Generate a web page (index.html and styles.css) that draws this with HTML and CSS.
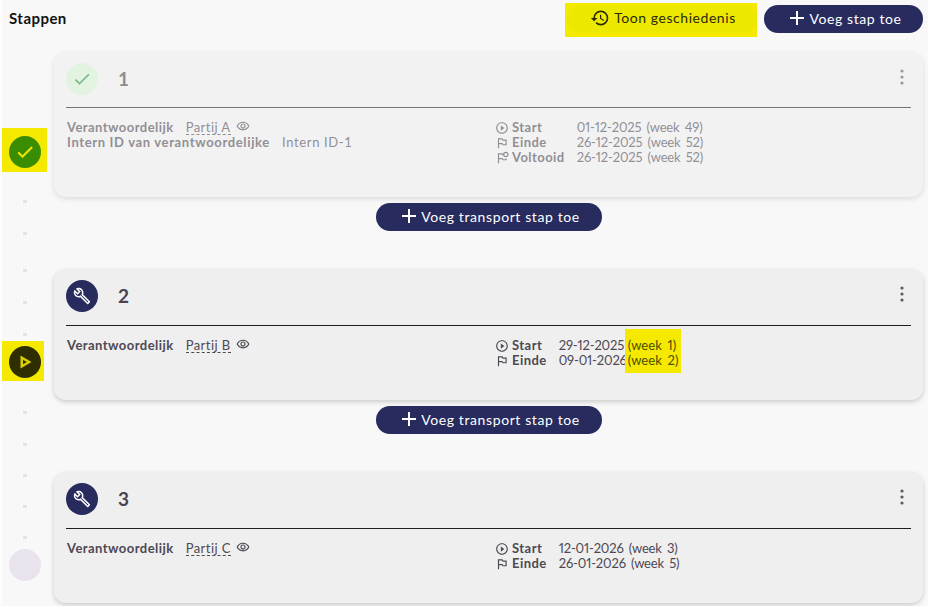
FILE: index.html
```html
<!DOCTYPE html>
<html lang="nl">
<head>
<meta charset="utf-8">
<title>Stappen</title>
<link rel="stylesheet" href="styles.css">
</head>
<body>
<svg class="defs" aria-hidden="true">
  <symbol id="i-history" viewBox="0 0 24 24"><path d="M13 3a9 9 0 0 0-9 9H1l3.89 3.89.07.14L9 12H6c0-3.87 3.13-7 7-7s7 3.13 7 7-3.13 7-7 7c-1.93 0-3.68-.79-4.94-2.06l-1.42 1.42A8.954 8.954 0 0 0 13 21a9 9 0 0 0 0-18zm-1 5v5l4.28 2.54.72-1.21-3.5-2.08V8H12z"/></symbol>
  <symbol id="i-plus" viewBox="0 0 24 24"><path d="M19 13h-6v6h-2v-6H5v-2h6V5h2v6h6v2z"/></symbol>
  <symbol id="i-check" viewBox="0 0 24 24"><path d="M9 16.17L4.83 12l-1.42 1.41L9 19 21 7l-1.41-1.41z"/></symbol>
  <symbol id="i-wrench" viewBox="0 0 24 24"><path d="M22.61 18.99l-9.08-9.08c.93-2.34.45-5.1-1.44-7C9.79.61 6.21.4 3.66 2.26L7.5 6.11 6.08 7.52 2.25 3.69C.39 6.23.6 9.82 2.9 12.11c1.86 1.86 4.57 2.35 6.89 1.48l9.11 9.11c.39.39 1.02.39 1.41 0l2.3-2.3c.4-.38.4-1.01 0-1.41zm-3 1.6l-9.46-9.46c-.61.45-1.29.72-2 .82-1.36.2-2.79-.21-3.83-1.25C3.37 9.76 2.93 8.5 3 7.26l3.09 3.09 4.24-4.24-3.09-3.09c1.24-.07 2.49.37 3.44 1.31 1.08 1.08 1.49 2.57 1.24 3.96-.12.71-.42 1.37-.88 1.96l9.45 9.45-.88.88z"/></symbol>
  <symbol id="i-play" viewBox="0 0 24 24"><path d="M12 2C6.48 2 2 6.48 2 12s4.48 10 10 10 10-4.48 10-10S17.52 2 12 2zm0 18c-4.41 0-8-3.59-8-8s3.59-8 8-8 8 3.59 8 8-3.59 8-8 8zM10 16.5l6-4.5-6-4.5v9z"/></symbol>
  <symbol id="i-flag" viewBox="0 0 24 24"><path d="M14 6l-1-2H5v17h2v-7h5l1 2h7V6h-6zm4 8h-4l-1-2H7V6h5l1 2h5v6z"/></symbol>
  <symbol id="i-flag-done" viewBox="0 0 24 24"><path d="M13 4H5v17h2v-7h5l1 2h7v-3h-2v1h-4l-1-2H7V6h5l1 2h1V6z"/><circle cx="18.5" cy="6" r="3.6" fill="none" stroke="currentColor" stroke-width="2"/></symbol>
  <symbol id="i-eye" viewBox="0 0 24 24"><path d="M12 6.500c3.790 0 7.170 2.130 8.820 5.500-1.650 3.370-5.020 5.500-8.820 5.500S4.830 15.370 3.180 12C4.830 8.630 8.210 6.500 12 6.500m0-2C7 4.500 2.730 7.610 1 12c1.730 4.390 6 7.500 11 7.500s9.270-3.110 11-7.500c-1.730-4.390-6-7.500-11-7.500zm0 5c1.380 0 2.500 1.120 2.500 2.500s-1.120 2.500-2.500 2.500-2.500-1.120-2.500-2.500 1.120-2.500 2.500-2.500m0-2c-2.480 0-4.500 2.020-4.500 4.500s2.020 4.500 4.500 4.500 4.500-2.020 4.500-4.500-2.020-4.500-4.500-4.500z"/></symbol>
  <symbol id="i-more" viewBox="0 0 24 24"><circle cx="12" cy="6" r="1.600"/><circle cx="12" cy="12" r="1.600"/><circle cx="12" cy="18" r="1.600"/></symbol>
  <symbol id="i-play-solid" viewBox="0 0 24 24"><path d="M7.500 5.500v13l11-6.500zM10 9.800l3.800 2.200-3.800 2.200z" fill-rule="evenodd"/></symbol>
</svg>

<header class="topbar">
  <h1 class="title">Stappen</h1>
  <div class="actions">
    <div class="hl-history">
      <button class="btn-history" type="button"><svg class="icon-20"><use href="#i-history"/></svg>Toon geschiedenis</button>
    </div>
    <button class="btn btn-step" type="button"><svg class="icon-plus"><use href="#i-plus"/></svg>Voeg stap toe</button>
  </div>
</header>

<main class="layout">
  <aside class="timeline">
    <div class="marker-hl marker-hl-first"><span class="marker marker-done"><svg class="icon-20"><use href="#i-check"/></svg></span></div>
    <div class="dots dots-a"><i></i><i></i></div>
    <div class="dots dots-b"><i></i><i></i><i></i></div>
    <div class="marker-hl marker-hl-second"><span class="marker marker-active"><svg class="icon-24"><use href="#i-play-solid"/></svg></span></div>
    <div class="dots dots-c"><i></i><i></i></div>
    <div class="dots dots-d"><i></i><i></i><i></i></div>
    <span class="marker marker-todo"></span>
  </aside>

  <div class="steps">
    <section class="card card-done">
      <div class="card-head">
        <span class="badge badge-done"><svg class="icon-20"><use href="#i-check"/></svg></span>
        <span class="step-no">1</span>
        <svg class="kebab"><use href="#i-more"/></svg>
      </div>
      <div class="card-body">
        <div class="people">
          <div class="person"><strong>Verantwoordelijk</strong><span class="party">Partij A</span><svg class="eye"><use href="#i-eye"/></svg></div>
          <div class="person person-wide"><strong>Intern ID van verantwoordelijke</strong><span>Intern ID-1</span></div>
        </div>
        <div class="dates">
          <div class="date-labels">
            <div class="date-label"><svg class="icon-14"><use href="#i-play"/></svg>Start</div>
            <div class="date-label"><svg class="icon-14"><use href="#i-flag"/></svg>Einde</div>
            <div class="date-label"><svg class="icon-14"><use href="#i-flag-done"/></svg>Voltooid</div>
          </div>
          <div class="date-values">
            <div>01-12-2025 (week 49)</div>
            <div>26-12-2025 (week 52)</div>
            <div>26-12-2025 (week 52)</div>
          </div>
        </div>
      </div>
    </section>
    <div class="add-row"><button class="btn btn-transport" type="button"><svg class="icon-plus"><use href="#i-plus"/></svg>Voeg transport stap toe</button></div>

    <section class="card">
      <div class="card-head">
        <span class="badge"><svg class="icon-18"><use href="#i-wrench"/></svg></span>
        <span class="step-no">2</span>
        <svg class="kebab"><use href="#i-more"/></svg>
      </div>
      <div class="card-body">
        <div class="people">
          <div class="person"><strong>Verantwoordelijk</strong><span class="party">Partij B</span><svg class="eye"><use href="#i-eye"/></svg></div>
        </div>
        <div class="dates">
          <div class="date-labels">
            <div class="date-label"><svg class="icon-14"><use href="#i-play"/></svg>Start</div>
            <div class="date-label"><svg class="icon-14"><use href="#i-flag"/></svg>Einde</div>
          </div>
          <div class="date-values">
            <div>29-12-2025</div>
            <div>09-01-2026</div>
          </div>
          <div class="week-hl">
            <div>(week 1)</div>
            <div>(week 2)</div>
          </div>
        </div>
      </div>
    </section>
    <div class="add-row"><button class="btn btn-transport" type="button"><svg class="icon-plus"><use href="#i-plus"/></svg>Voeg transport stap toe</button></div>

    <section class="card">
      <div class="card-head">
        <span class="badge"><svg class="icon-18"><use href="#i-wrench"/></svg></span>
        <span class="step-no">3</span>
        <svg class="kebab"><use href="#i-more"/></svg>
      </div>
      <div class="card-body">
        <div class="people">
          <div class="person"><strong>Verantwoordelijk</strong><span class="party">Partij C</span><svg class="eye"><use href="#i-eye"/></svg></div>
        </div>
        <div class="dates">
          <div class="date-labels">
            <div class="date-label"><svg class="icon-14"><use href="#i-play"/></svg>Start</div>
            <div class="date-label"><svg class="icon-14"><use href="#i-flag"/></svg>Einde</div>
          </div>
          <div class="date-values">
            <div>12-01-2026 (week 3)</div>
            <div>26-01-2026 (week 5)</div>
          </div>
        </div>
      </div>
    </section>
  </div>
</main>
</body>
</html>
```
FILE: styles.css
```css
* { box-sizing: border-box; }
html, body { height: 100%; }
body {
  margin: 0;
  height: 606px;
  overflow: hidden;
  background: #f8f8f8;
  border-left: 2px solid #fdfdfd;
  font-family: "Lato", "Liberation Sans", sans-serif;
  font-size: 13px;
  line-height: 15px;
  letter-spacing: .45px;
  color: #4d4853;
}
.defs { display: none; }
svg { fill: currentColor; flex: none; display: block; }
.icon-14 { width: 14px; height: 14px; }
.icon-18 { width: 18px; height: 18px; }
.icon-20 { width: 20px; height: 20px; }
.icon-24 { width: 24px; height: 24px; }
.icon-plus { width: 24px; height: 24px; }

.topbar {
  height: 52px;
  padding: 3px 5px 0 7px;
  display: flex;
  justify-content: space-between;
  align-items: flex-start;
}
.title {
  margin: 7px 0 0;
  font-size: 15px;
  line-height: 17px;
  font-weight: 700;
  color: #111;
}
.actions { display: flex; align-items: flex-start; gap: 7px; }
.hl-history {
  width: 192px;
  height: 34px;
  padding: 2px 0 4px 2px;
  background: #f6e900;
}
.btn-history {
  width: 100%;
  height: 28px;
  border: 0;
  border-radius: 14px;
  background: #ece800;
  color: #2a2a00;
  font: inherit;
  font-size: 14px;
  letter-spacing: .55px;
  display: flex;
  align-items: center;
  justify-content: center;
  gap: 4px;
  padding: 0 0 3px 2px;
}
.btn {
  height: 28px;
  border: 0;
  border-radius: 14px;
  background: #272b5e;
  color: #fff;
  font: inherit;
  font-size: 14px;
  letter-spacing: .6px;
  display: flex;
  align-items: center;
  justify-content: center;
  gap: 0;
  padding: 0 0 2px;
}
.btn-step { width: 159px; margin-top: 2px; }
.btn-transport { width: 226px; }

.layout { display: flex; }
.timeline { width: 52px; flex: none; display: flex; flex-direction: column; align-items: flex-start; }
.marker {
  width: 32px;
  height: 32px;
  border-radius: 50%;
  display: flex;
  align-items: center;
  justify-content: center;
  flex: none;
}
.marker-done { background: #3a8c00; color: #f2e600; }
.marker-done svg { stroke: currentColor; stroke-width: .8px; }
.marker-active { background: #2e2e00; color: #d8d000; }
.marker-todo { background: #e8e3ec; margin: 10px 0 0 7px; }
.marker-hl { background: #f6e900; }
.marker-hl-first { margin-top: 76px; padding: 8px 6px 4px 7px; }
.marker-hl-second { margin-top: 5px; padding: 5px 3px 3px 7px; }
.dots { display: flex; flex-direction: column; gap: 29px; margin-left: 21px; }
.dots i { display: block; width: 4px; height: 3px; background: #e6e2ea; }
.dots-a { margin-top: 28px; }
.dots-b { margin-top: 34px; }
.dots-c { margin-top: 30px; }
.dots-d { margin-top: 28px; gap: 28px; }

.steps { flex: 1; min-width: 0; padding-right: 5px; }
.card {
  background: #efefef;
  border-radius: 12px;
  box-shadow: 0 2px 5px rgba(0, 0, 0, .18);
  padding: 11px 12px 32px;
}
.card-done { opacity: .6; }
.card-head {
  height: 46px;
  border-bottom: 1px solid #1d1d1d;
  display: flex;
  align-items: flex-start;
}
.card-done .card-head { height: 45px; }
.badge {
  width: 32px;
  height: 32px;
  border-radius: 50%;
  background: #272b5e;
  color: #fff;
  display: flex;
  align-items: center;
  justify-content: center;
}
.badge-done { background: #d4f3d2; color: #2a8a3a; }
.step-no {
  margin-left: 20px;
  font-size: 19px;
  line-height: 32px;
  font-weight: 700;
  color: #4a4550;
}
.kebab { width: 24px; height: 24px; margin: 2px -3px 0 auto; color: #5e5964; }
.card-body {
  padding-top: 12px;
  display: grid;
  grid-template-columns: 1fr 1fr;
  column-gap: 13px;
}
.people { padding-left: 1px; }
.people strong, .date-label { font-weight: 700; }
.person { display: flex; gap: 12px; align-items: flex-start; }
.person-wide { letter-spacing: .65px; }
.party { border-bottom: 1px dashed #4d4853; height: 15px; }
.eye { width: 14px; height: 14px; margin-left: -7px; margin-top: -1px; }
.dates { display: flex; align-items: flex-start; gap: 12px; }
.date-label { display: flex; align-items: center; gap: 3px; height: 15px; }
.date-values, .week-hl { letter-spacing: -.15px; word-spacing: 2px; font-variant-numeric: proportional-nums; }
.week-hl {
  margin: -9px 0 -5px -14px;
  padding: 9px 3px 5px;
  background: #f6e900;
  color: #4d4d00;
  letter-spacing: .1px;
}
.add-row { display: flex; justify-content: center; padding: 6px 0 38px; }
```
